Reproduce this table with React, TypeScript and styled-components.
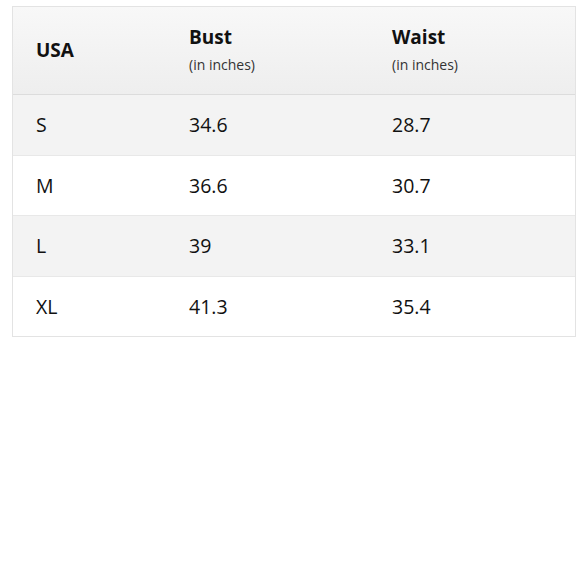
import styled, { createGlobalStyle } from 'styled-components'

const GlobalStyle = createGlobalStyle`
  body {
    margin: 0;
    background: #ffffff;
    font-family: "Open Sans", "Noto Sans", sans-serif;
    color: #111111;
  }
`

const sizes = [
  { size: 'S', bust: '34.6', waist: '28.7' },
  { size: 'M', bust: '36.6', waist: '30.7' },
  { size: 'L', bust: '39', waist: '33.1' },
  { size: 'XL', bust: '41.3', waist: '35.4' },
]

const App = () => {
  return (
    <>
      <GlobalStyle />
      <SPage>
        <STable>
          <SHeadRow>
            <SHeadCell>
              <STitle>USA</STitle>
            </SHeadCell>
            <SHeadCell>
              <STitle>Bust</STitle>
              <SUnit>(in inches)</SUnit>
            </SHeadCell>
            <SHeadCell>
              <STitle>Waist</STitle>
              <SUnit>(in inches)</SUnit>
            </SHeadCell>
          </SHeadRow>
          {sizes.map((row, i) => (
            <SRow key={row.size} $shaded={i % 2 === 0} $last={i === sizes.length - 1}>
              <SCell>{row.size}</SCell>
              <SCell>{row.bust}</SCell>
              <SCell>{row.waist}</SCell>
            </SRow>
          ))}
        </STable>
      </SPage>
    </>
  )
}

const SPage = styled.div`
  padding: 6px 4px 0 12px;
`

const STable = styled.div`
  width: 562px;
  border: 1px solid #e3e3e3;
`

const SHeadRow = styled.div`
  display: grid;
  grid-template-columns: 153px 203px 1fr;
  height: 87px;
  background: linear-gradient(to bottom, #f8f8f8, #eeeeee);
  border-bottom: 1px solid #dcdcdc;
`

const SHeadCell = styled.div`
  display: flex;
  flex-direction: column;
  justify-content: center;
  padding-left: 23px;
`

const STitle = styled.div`
  font-size: 19px;
  font-weight: 700;
  line-height: 26px;
  margin-top: -2px;
`

const SUnit = styled.div`
  font-size: 14px;
  line-height: 22px;
  margin-top: 4px;
  color: #333;
`

const SRow = styled.div<{ $shaded: boolean; $last: boolean }>`
  display: grid;
  grid-template-columns: 153px 203px 1fr;
  height: 59.5px;
  align-items: center;
  background: ${p => (p.$shaded ? '#f3f3f3' : '#ffffff')};
  border-bottom: ${p => (p.$last ? 'none' : '1px solid #e8e8e8')};
`

const SCell = styled.div`
  padding-left: 23px;
  font-size: 19.5px;
`

export default App
